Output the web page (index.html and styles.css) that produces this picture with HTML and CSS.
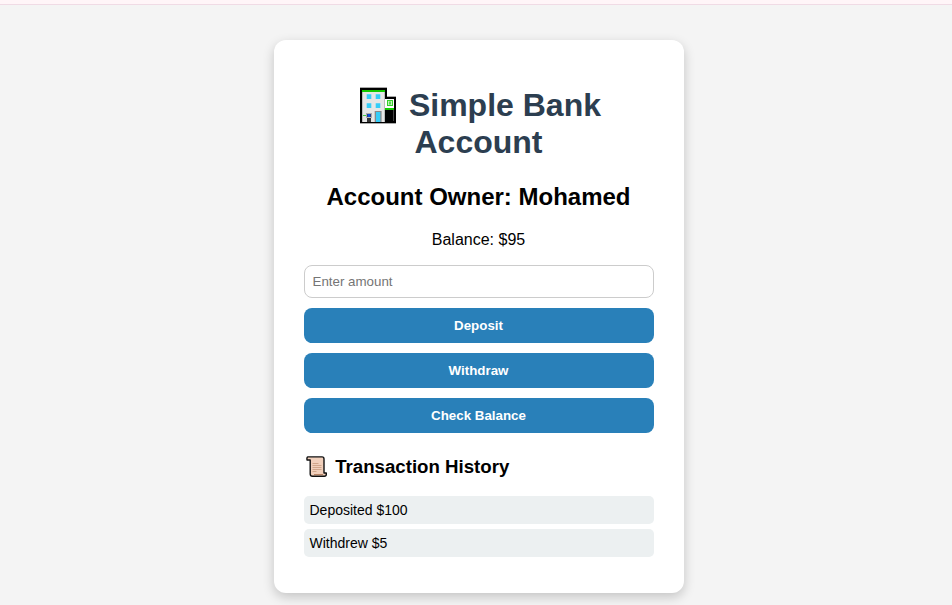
FILE: index.html
```html
<!DOCTYPE html>
<html lang="en">
<head>
<meta charset="utf-8">
<title>Simple Bank Account</title>
<link rel="stylesheet" href="styles.css">
</head>
<body>
<div class="topline"></div>
<main class="card">
  <h1><svg class="bank" viewBox="0 0 43 37" aria-hidden="true">
    <path fill="#aaa" d="M3 0h27v9h9v28H3z"/>
    <path fill="#000" d="M3 1h27v9h9v26H3z"/>
    <path fill="#e6e6e6" d="M5 3h23v32H5z"/>
    <path fill="#bbb" d="M27 5h1v30h-1zM5 5h1v30H5z"/>
    <path fill="#14c800" d="M5 3h23v2H5z"/>
    <path fill="#35cdf8" d="M9.7 7.3h4.6v4.6h-4.6zM18.7 7.3h4.6v4.6h-4.6zM9.7 16.3h4.6v4.6h-4.6zM18.7 16.3h4.6v4.6h-4.6z"/>
    <path fill="#888" d="M17.7 24h6.9v11h-6.9z"/>
    <path fill="#35cdf8" d="M19 25h4.3v10H19z"/>
    <path fill="#aaa" d="M9 26h6v5H9z"/>
    <path fill="#333" d="M10 27h4v8h-4z"/>
    <path fill="#0c4de0" d="M10.5 27h3v3h-3z"/>
    <path fill="#bbb" d="M10 30h4v1h-4z"/>
    <path fill="#4c4" d="M6 28h3v1H6z"/>
    <path fill="#fff" d="M28 12h9v9h-9z"/>
    <path fill="#35d12b" d="M30 13h6v6h-6z"/>
    <path fill="#c5f2bd" d="M31 14h4v4h-4z"/>
    <path fill="#55d84a" d="M32 14.5h2v3h-2z"/>
    <path fill="#14c800" d="M28 21h9v2h-9z"/>
    <path fill="#444" d="M36 23h1v11h-1z"/>
  </svg> Simple Bank <span class="title-end">Account</span></h1>
  <h2>Account Owner: Mohamed</h2>
  <p class="balance">Balance: $95</p>
  <input class="amount" type="text" placeholder="Enter amount">
  <button>Deposit</button>
  <button>Withdraw</button>
  <button>Check Balance</button>
  <h3><svg class="scroll" viewBox="0 0 26 22" aria-hidden="true">
    <path fill="#f1d0bc" stroke="#111" stroke-width="1.4" stroke-linejoin="round" d="M4 .9H18Q20 .9 20 3V17H22.3V18.5Q22.3 20.2 20.3 20.2H8.5Q6.2 20.2 6.2 18V4H3Q2.6 .9 4 .9Z"/>
    <path fill="none" stroke="#b98466" d="M10 18.5H19"/>
    <path fill="none" stroke="#d0a68b" d="M8.5 7.5h6M8.5 9.5h9M8.5 11.5h9M8.5 13.5h9M8.5 15.5h4"/>
  </svg> Transaction History</h3>
  <ul class="history">
    <li>Deposited $100</li>
    <li>Withdrew $5</li>
  </ul>
</main>
</body>
</html>
```
FILE: styles.css
```css
* {
  box-sizing: border-box;
}

body {
  margin: 0;
  height: 605px;
  overflow: hidden;
  background: #f4f4f4;
  font-family: "Liberation Sans", Arial, sans-serif;
  color: #000;
  padding-left: 6px;
}

.topline {
  height: 5px;
  margin-left: -6px;
  background: #fff5f8;
  border-bottom: 1px solid #f0dbe5;
}

.card {
  width: 410px;
  height: 553px;
  margin: 35px auto 0;
  padding: 47px 30px 30px;
  background: #fff;
  border-radius: 12px;
  box-shadow: 0 4px 12px rgba(0, 0, 0, 0.2);
  text-align: center;
}

h1 {
  margin: 0 0 22px;
  font-size: 32px;
  line-height: 37px;
  color: #2c3e50;
}

.title-end {
  margin-right: 1px;
}

.bank {
  width: 43px;
  height: 37px;
  margin-top: -0.5px;
  vertical-align: top;
}

h2 {
  margin: 0;
  padding-right: 1px;
  font-size: 24px;
  line-height: 27px;
}

.balance {
  margin: 21px 0 16px;
  padding-right: 1px;
  font-size: 16px;
  line-height: 18px;
}

.amount {
  display: block;
  width: 100%;
  height: 33px;
  padding: 8px 7.5px;
  border: 1px solid #ccc;
  border-radius: 8px;
  font: 13.333px "Liberation Sans", Arial, sans-serif;
}

.amount::placeholder {
  color: #757575;
}

button {
  display: block;
  width: 100%;
  height: 35px;
  margin-top: 10px;
  padding: 0 1px 0 0;
  border: 0;
  border-radius: 8px;
  background: #2980b9;
  color: #fff;
  font: bold 13.333px "Liberation Sans", Arial, sans-serif;
}

h3 {
  margin: 23px 0 19px;
  font-size: 18.66px;
  line-height: 21px;
  height: 21px;
  text-align: left;
}

.scroll {
  width: 26px;
  height: 22px;
  vertical-align: top;
}

.history {
  margin: 0;
  padding: 0;
  list-style: none;
  text-align: left;
}

.history li {
  height: 28px;
  margin-bottom: 5px;
  padding: 6px 5.5px;
  border-radius: 5px;
  background: #ecf0f1;
  font-size: 14px;
  line-height: 16px;
}
```
